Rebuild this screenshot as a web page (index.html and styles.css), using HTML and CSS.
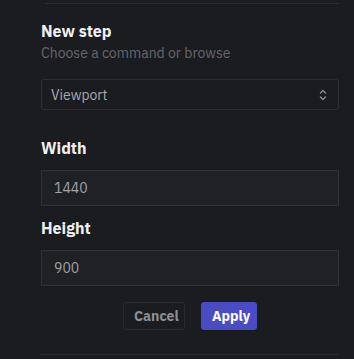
FILE: index.html
```html
<!DOCTYPE html>
<html>
<head lang="en">
    <meta charset="UTF-8">
    <title>New step</title>
    <link rel="stylesheet" href="styles.css">
</head>
<body>
    <div class="panel">
        <div class="rule rule-top"></div>
        <h2 class="title">New step</h2>
        <p class="hint">Choose a command or browse</p>
        <div class="select">
            <span>Viewport</span>
            <svg class="chev" width="10" height="12" viewBox="0 0 10 12">
                <path d="M2 4.5 L5 1.5 L8 4.5 M2 7.5 L5 10.5 L8 7.5" fill="none" stroke="#8a8a90" stroke-width="1.3"/>
            </svg>
        </div>
        <label class="label label-first">Width</label>
        <div class="input">1440</div>
        <label class="label">Height</label>
        <div class="input">900</div>
        <div class="actions">
            <button class="btn btn-cancel">Cancel</button>
            <button class="btn btn-apply">Apply</button>
        </div>
        <div class="rule rule-bottom"></div>
    </div>
</body>
</html>
```

FILE: styles.css
```css
* {
    margin: 0;
    padding: 0;
    box-sizing: border-box;
}
body {
    background: #1b1c1f;
    font-family: "IBM Plex Sans", "Noto Sans", sans-serif;
    color: #e8e8ea;
}
.panel {
    padding: 0 15px 0 41px;
    display: flex;
    flex-direction: column;
}
.rule {
    height: 1px;
    background: #2a2b30;
}
.rule-top {
    margin: 3px 0 0 4px;
}
.title {
    font-size: 16px;
    font-weight: 700;
    line-height: 22px;
    margin-top: 16px;
    color: #f0f0f2;
}
.hint {
    font-size: 14px;
    line-height: 20px;
    color: #66676c;
    margin-top: 1px;
}
.select {
    margin-top: 16px;
    height: 31px;
    border: 1px solid #2e2f34;
    border-radius: 3px;
    display: flex;
    align-items: center;
    justify-content: space-between;
    padding: 0 10px 0 9px;
    font-size: 14px;
    color: #a9a9ae;
}
.chev {
    display: block;
}
.label {
    font-size: 16px;
    font-weight: 700;
    line-height: 22px;
    color: #f0f0f2;
    margin-top: 11px;
}
.label-first {
    margin-top: 27px;
}
.input {
    margin-top: 11px;
    height: 36px;
    background: #202125;
    border: 1px solid #303136;
    padding: 0 12px;
    display: flex;
    align-items: center;
    font-size: 14px;
    color: #a3a3a8;
}
.actions {
    display: flex;
    justify-content: center;
    gap: 16px;
    margin-top: 16px;
}
.btn {
    height: 28px;
    border-radius: 3px;
    font-family: inherit;
    font-size: 14px;
    font-weight: 700;
    padding: 0 10px;
}
.btn-cancel {
    width: 62px;
    background: #1b1c1f;
    border: 1px solid #2a2b30;
    color: #8e8e93;
}
.btn-apply {
    width: 56px;
    background: #4a4cc4;
    border: 1px solid #4a4cc4;
    color: #ffffff;
}
.rule-bottom {
    margin-top: 24px;
}
```
